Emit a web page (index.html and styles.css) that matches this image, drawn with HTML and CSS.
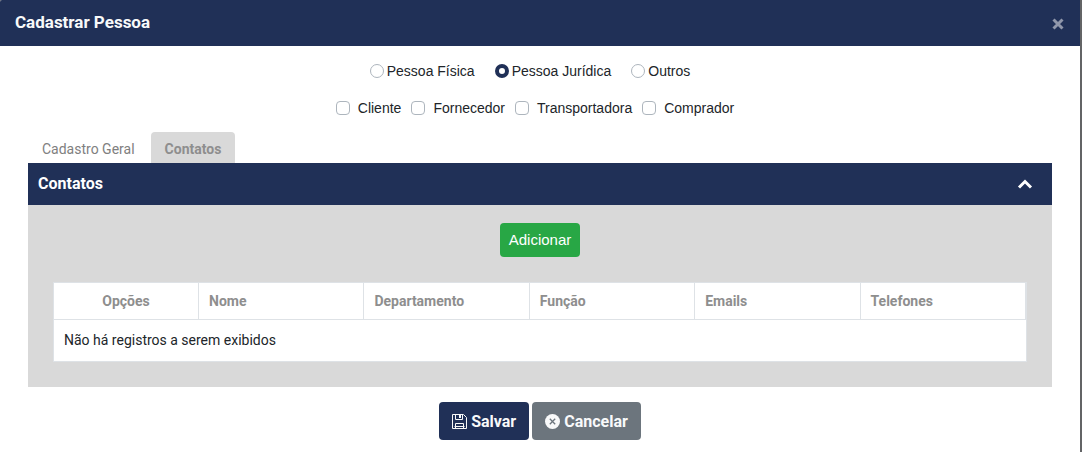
FILE: index.html
```
<!DOCTYPE html>
<html lang="pt-BR">
<head>
  <meta charset="UTF-8" />
  <meta name="viewport" content="width=device-width, initial-scale=1.0"/>
  <title>Cadastrar Pessoa</title>
  <link rel="stylesheet" href="styles.css">
</head>
<body>
  <div class="modal">
    <div class="modal-header">
      <h1>Cadastrar Pessoa</h1>
      <button type="button" class="close" aria-label="Fechar">
        <svg width="12" height="12" viewBox="0 0 12 12"><path d="M1.500 1.500l9 9M10.500 1.500l-9 9" fill="none" stroke="currentColor" stroke-width="3"/></svg>
      </button>
    </div>

    <form class="modal-body">
      <div class="radios">
        <label><input type="radio" name="tipo" /> <span>Pessoa Física</span></label>
        <label><input type="radio" name="tipo" checked /> <span>Pessoa Jurídica</span></label>
        <label><input type="radio" name="tipo" /> <span>Outros</span></label>
      </div>

      <div class="checks">
        <label><input type="checkbox" /> <span>Cliente</span></label>
        <label><input type="checkbox" /> <span>Fornecedor</span></label>
        <label><input type="checkbox" /> <span>Transportadora</span></label>
        <label><input type="checkbox" /> <span>Comprador</span></label>
      </div>

      <nav class="tabs">
        <a href="#geral">Cadastro Geral</a>
        <a href="#contatos" class="active">Contatos</a>
      </nav>

      <section class="panel" id="contatos">
        <div class="panel-header">
          <h2>Contatos</h2>
          <button type="button" class="toggle" aria-label="Recolher">
            <svg width="16" height="12" viewBox="0 0 16 12"><path d="M2 9.500l6-6 6 6" fill="none" stroke="currentColor" stroke-width="3"/></svg>
          </button>
        </div>
        <div class="panel-body">
          <button type="button" class="btn-add">Adicionar</button>
          <div class="table-box">
            <table>
              <thead>
                <tr>
                  <th class="col-options">Opções</th>
                  <th>Nome</th>
                  <th>Departamento</th>
                  <th>Função</th>
                  <th>Emails</th>
                  <th>Telefones</th>
                </tr>
              </thead>
              <tbody>
                <tr>
                  <td colspan="6">Não há registros a serem exibidos</td>
                </tr>
              </tbody>
            </table>
          </div>
        </div>
      </section>

      <div class="actions">
        <button type="submit" class="btn btn-save">
          <svg width="15" height="15" viewBox="0 0 15 15" fill="none" stroke="currentColor"><path d="M.5.5h11l3 3v11H.5z"/><path d="M3.500.5v5h7v-5M7.500 1v3M8.500 1v3M3.500 14.500v-5h8v5M2.500 12.500h10"/></svg>
          Salvar
        </button>
        <button type="button" class="btn btn-cancel">
          <svg width="15" height="15" viewBox="0 0 15 15"><circle cx="7.500" cy="7.500" r="7.500" fill="currentColor"/><path d="M4.800 4.800l5.400 5.400M10.200 4.800l-5.400 5.400" stroke="#6c757d" stroke-width="1.300"/></svg>
          Cancelar
        </button>
      </div>
    </form>
  </div>
</body>
</html>
```
FILE: styles.css
```
* {
  margin: 0; padding: 0;
  box-sizing: border-box;
}
body {
  background-color: #636466;
  color: #212529;
  font-family: Roboto, sans-serif;
  font-size: 14px;
  padding-right: 2px;
}
button {
  border: none;
  font-family: inherit;
  cursor: pointer;
}
svg {
  display: block;
}
.modal {
  background-color: white;
  min-height: 100vh;
  border-top-left-radius: 2px;
}
.modal-header {
  display: flex;
  align-items: center;
  justify-content: space-between;
  height: 46px;
  padding: 0 16px 2px 15px;
  background-color: #203057;
  color: #f8f9fa;
  border-top-left-radius: 2px;
}
h1 {
  font-size: 17px;
  line-height: 20px;
  font-weight: bold;
}
.close {
  background: none;
  color: #9097ab;
  padding-top: 4px;
}
.modal-body {
  padding: 16px 28px 12px;
}
.radios, .checks {
  display: flex;
  justify-content: center;
  font-family: "Liberation Sans", Arial, sans-serif;
  line-height: 18px;
}
.checks {
  margin: 19px 0 15px;
}
.radios label, .checks label {
  display: flex;
  align-items: center;
}
.radios label {
  gap: 3px;
  margin-right: 20px;
}
.checks label {
  gap: 8px;
  margin-right: 10px;
}
.radios input, .checks input {
  appearance: none;
  width: 14px;
  height: 14px;
  border: 1px solid #adb5bd;
  border-radius: 4px;
  background-color: white;
}
.radios input {
  border-radius: 50%;
}
.radios input:checked {
  border: 4px solid #203057;
}
.checks input:checked {
  background-color: #203057;
}
.tabs {
  display: flex;
  gap: 2px;
}
.tabs a {
  padding: 8px 14px 5px;
  line-height: 18px;
  border-radius: 4px 4px 0 0;
  color: #808080;
  text-decoration: none;
}
.tabs .active {
  background-color: #d9d9d9;
  color: #8e8e8e;
  font-weight: bold;
}
.panel-header {
  display: flex;
  align-items: center;
  justify-content: space-between;
  height: 42px;
  padding: 0 19px 0 10px;
  background-color: #203057;
  color: white;
}
h2 {
  font-size: 16px;
  line-height: 20px;
  font-weight: bold;
}
.toggle {
  background: none;
  color: white;
}
.panel-body {
  padding: 18px 25px 25px;
  background-color: #d9d9d9;
}
.btn-add {
  display: block;
  margin: 0 auto 25px;
  padding: 8px 9px;
  border-radius: 4px;
  background-color: #28a745;
  color: white;
  font-family: "Liberation Sans", Arial, sans-serif;
  font-size: 15px;
  line-height: 18px;
}
.table-box {
  border: 1px solid #dee2e6;
  background-color: white;
}
table {
  width: 100%;
  table-layout: fixed;
  border-spacing: 0;
}
th, td {
  padding: 9px 10px;
  line-height: 18px;
  text-align: left;
}
th {
  border-right: 1px solid #dee2e6;
  border-bottom: 1px solid #dee2e6;
  color: #8e8e8e;
}
td {
  padding: 11px 10px 12px;
}
.col-options {
  width: 145px;
  text-align: center;
}
.actions {
  display: flex;
  justify-content: center;
  gap: 3px;
  margin-top: 15px;
}
.btn {
  display: flex;
  align-items: center;
  gap: 4px;
  height: 38px;
  padding: 0 13px;
  border-radius: 4px;
  color: #f8f9fa;
  font-size: 16px;
  font-weight: bold;
}
.btn-save {
  background-color: #203057;
}
.btn-cancel {
  background-color: #6c757d;
}
```
